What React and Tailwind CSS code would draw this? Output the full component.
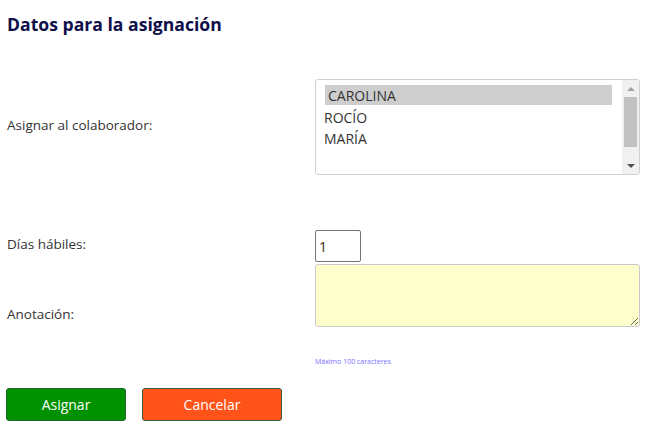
import React from 'react';

const font = { fontFamily: '"Open Sans", "Noto Sans", sans-serif' };

const Listbox = ({ items, selected }) => (
  <div className="flex w-[325px] h-[96px] border border-[#cfcfd6] rounded-[3px] bg-white overflow-hidden">
    <div className="flex-1 pl-[9px] pr-[10px] pt-[5px] text-[14px] leading-[21px] text-[#333]">
      {items.map((it) => (
        <div
          key={it}
          className={it === selected ? 'bg-[#cecece] pl-[3px] h-[20px] leading-[21px] mb-[1px]' : 'h-[21px] leading-[23px] -ml-[1px]'}
        >
          {it}
        </div>
      ))}
    </div>
    <div className="w-[17px] bg-[#f0f0f0] flex flex-col items-center">
      <div className="h-[17px] flex items-center justify-center">
        <span className="w-0 h-0 border-l-[4px] border-r-[4px] border-b-[4px] border-l-transparent border-r-transparent border-b-[#a3a3a3]" />
      </div>
      <div className="w-[13px] h-[50px] bg-[#c1c1c1]" />
      <div className="flex-1" />
      <div className="h-[17px] flex items-center justify-center">
        <span className="w-0 h-0 border-l-[4px] border-r-[4px] border-t-[4px] border-l-transparent border-r-transparent border-t-[#505050]" />
      </div>
    </div>
  </div>
);

export default function App() {
  return (
    <div className="w-[669px] h-[434px] bg-white text-[#333] text-[13.5px]" style={font}>
      <h1 className="pl-[7px] pt-[11px] text-[17.6px] font-bold leading-[26px] text-[#0f0f4a]">
        Datos para la asignación
      </h1>

      <div className="grid grid-cols-[308px_325px] items-center pl-[7px] mt-[42px]">
        <div className="-mt-[3px]">Asignar al colaborador:</div>
        <Listbox items={['CAROLINA', 'ROCÍO', 'MARÍA']} selected="CAROLINA" />

        <div className="mt-[52px]">Días hábiles:</div>
        <div className="mt-[55px]">
          <div className="w-[46px] h-[32px] border border-[#767676] rounded-[2px] pl-[3px] flex items-center text-[14px] text-[#3a2a10]">
            1
          </div>
        </div>

        <div className="-mt-[1px]">Anotación:</div>
        <div className="mt-[2px] flex flex-col">
          <textarea
            className="w-[325px] h-[63px] bg-[#ffffcc] border border-[#c9c9d2] rounded-[3px] block"
            defaultValue=""
          />
          <div className="mt-[30px] text-[7px] leading-[10px] text-[#7a6cff]">Máximo 100 caracteres</div>
        </div>
      </div>

      <div className="flex gap-[16px] pl-[6px] mt-[21px]">
        <button className="w-[120px] h-[33px] bg-[#009100] border border-[#1f6a2a] rounded-[3px] text-white text-[14px]">
          Asignar
        </button>
        <button className="w-[140px] h-[33px] bg-[#ff531a] border border-[#2f6043] rounded-[3px] text-white text-[14px]">
          Cancelar
        </button>
      </div>
    </div>
  );
}
